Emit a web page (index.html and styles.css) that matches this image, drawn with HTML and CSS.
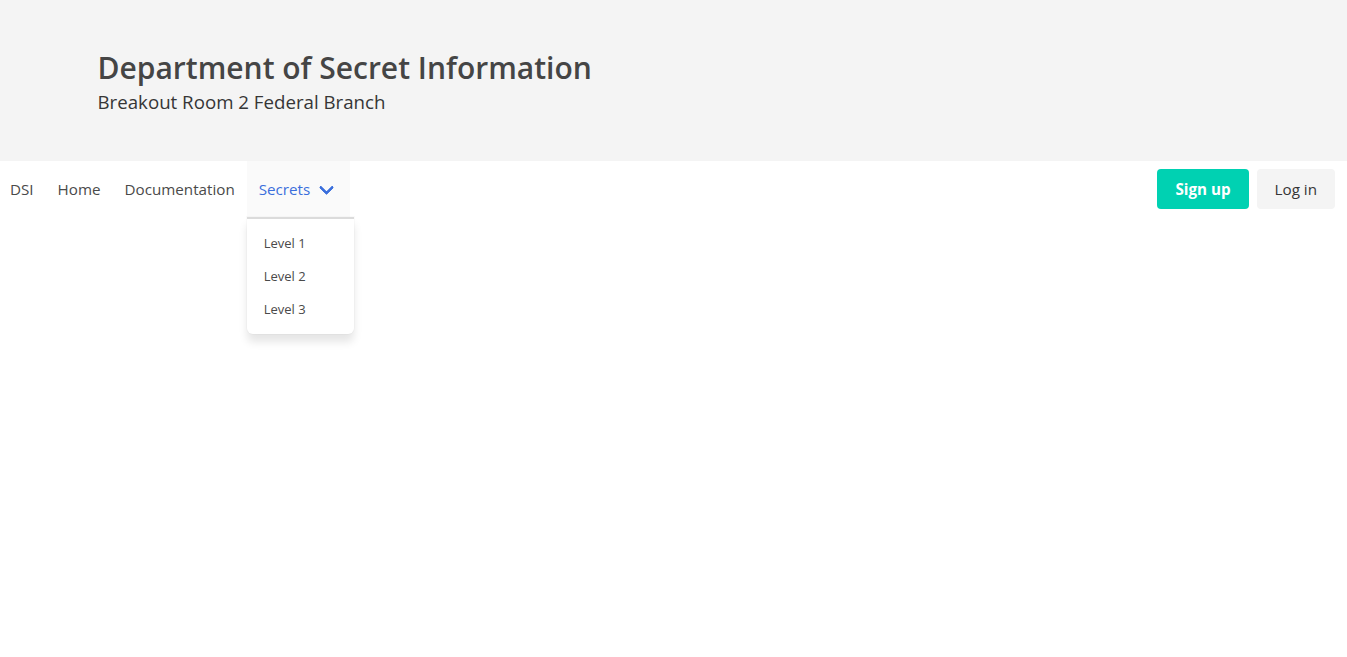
FILE: index.html
```html
<!DOCTYPE html>
<html lang="en">
<head>
<meta charset="utf-8">
<title>Department of Secret Information</title>
<link rel="stylesheet" href="styles.css">
</head>
<body>
<section class="hero">
  <div class="hero-body">
    <div class="container">
      <h1 class="title">Department of Secret Information</h1>
      <h2 class="subtitle">Breakout Room 2 Federal Branch</h2>
    </div>
  </div>
</section>
<nav class="navbar">
  <div class="navbar-brand">
    <a class="navbar-item brand-item" href="#">DSI</a>
  </div>
  <div class="navbar-menu">
    <div class="navbar-start">
      <a class="navbar-item" href="#">Home</a>
      <a class="navbar-item" href="#">Documentation</a>
      <div class="dd-wrap">
        <a class="navbar-link" href="#">Secrets</a>
        <div class="dd-menu">
          <a class="dd-item" href="#">Level 1</a>
          <a class="dd-item" href="#">Level 2</a>
          <a class="dd-item" href="#">Level 3</a>
        </div>
      </div>
    </div>
    <div class="navbar-end">
      <div class="navbar-item buttons">
        <a class="button is-primary" href="#">Sign up</a>
        <a class="button is-light" href="#">Log in</a>
      </div>
    </div>
  </div>
</nav>
</body>
</html>
```

FILE: styles.css
```css
* { box-sizing: border-box; }
html, body {
  margin: 0;
  padding: 0;
  min-height: 100vh;
  background: #fff;
  font-family: "Open Sans", "Noto Sans", "Liberation Sans", sans-serif;
  font-size: 16px;
  line-height: 1.5;
  color: #4a4a4a;
}
a { text-decoration: none; cursor: pointer; }

.hero {
  background: #f4f4f4;
}
.hero-body {
  padding: 50px 24px 0;
  height: 161px;
}
.container {
  max-width: 1152px;
  margin: 0 auto;
}
.title {
  margin: 0;
  font-size: 30px;
  font-weight: 600;
  line-height: 36px;
  color: #454545;
}
.subtitle {
  margin: 4px 0 0;
  font-size: 18.7px;
  font-weight: 400;
  line-height: 24px;
  color: #363636;
}

.navbar {
  display: flex;
  min-height: 56px;
  background: #fff;
}
.navbar-brand { display: flex; align-items: stretch; }
.navbar-menu {
  display: flex;
  flex: 1;
  justify-content: space-between;
  align-items: stretch;
}
.navbar-start, .navbar-end { display: flex; align-items: stretch; }
.navbar-item {
  display: flex;
  align-items: center;
  padding: 8px 12px;
  color: #4a4a4a;
  font-size: 15.2px;
}
.brand-item { padding-left: 10px; }
.dd-wrap {
  position: relative;
  display: flex;
  align-items: stretch;
}
.navbar-link {
  position: relative;
  display: flex;
  align-items: center;
  padding: 8px 40px 8px 12px;
  background: #fafafa;
  color: #3b6fdc;
  font-size: 15.2px;
}
.navbar-link::after {
  content: "";
  position: absolute;
  right: 18px;
  top: 50%;
  margin-top: -7px;
  width: 8px;
  height: 8px;
  border: 3px solid #3b6fdc;
  border-top: 0;
  border-right: 0;
  border-radius: 2px;
  transform: rotate(-45deg);
}
.dd-menu {
  position: absolute;
  top: 100%;
  left: 0;
  display: block;
  width: 107px;
  background: #ffffff;
  border-top: 2px solid #dbdbdb;
  border-radius: 0 0 6px 6px;
  box-shadow: 0 8px 8px rgba(10,10,10,0.1), 0 0 0 1px rgba(10,10,10,0.02);
  padding: 8px 0;
  z-index: 20;
}
.dd-item {
  display: block;
  padding: 6px 16px 6px 17px;
  font-size: 13px;
  line-height: 21px;
  color: #4a4a4a;
  white-space: nowrap;
}

.buttons { gap: 8px; padding-right: 12px; }
.button {
  display: inline-flex;
  align-items: center;
  justify-content: center;
  height: 40px;
  padding: 0 18px;
  border-radius: 4px;
  font-size: 15.2px;
}
.button.is-primary {
  background: #00d1b2;
  color: #fff;
  font-weight: 700;
  padding: 0 18px;
}
.button.is-light {
  background: #f4f4f4;
  color: #363636;
}
```
